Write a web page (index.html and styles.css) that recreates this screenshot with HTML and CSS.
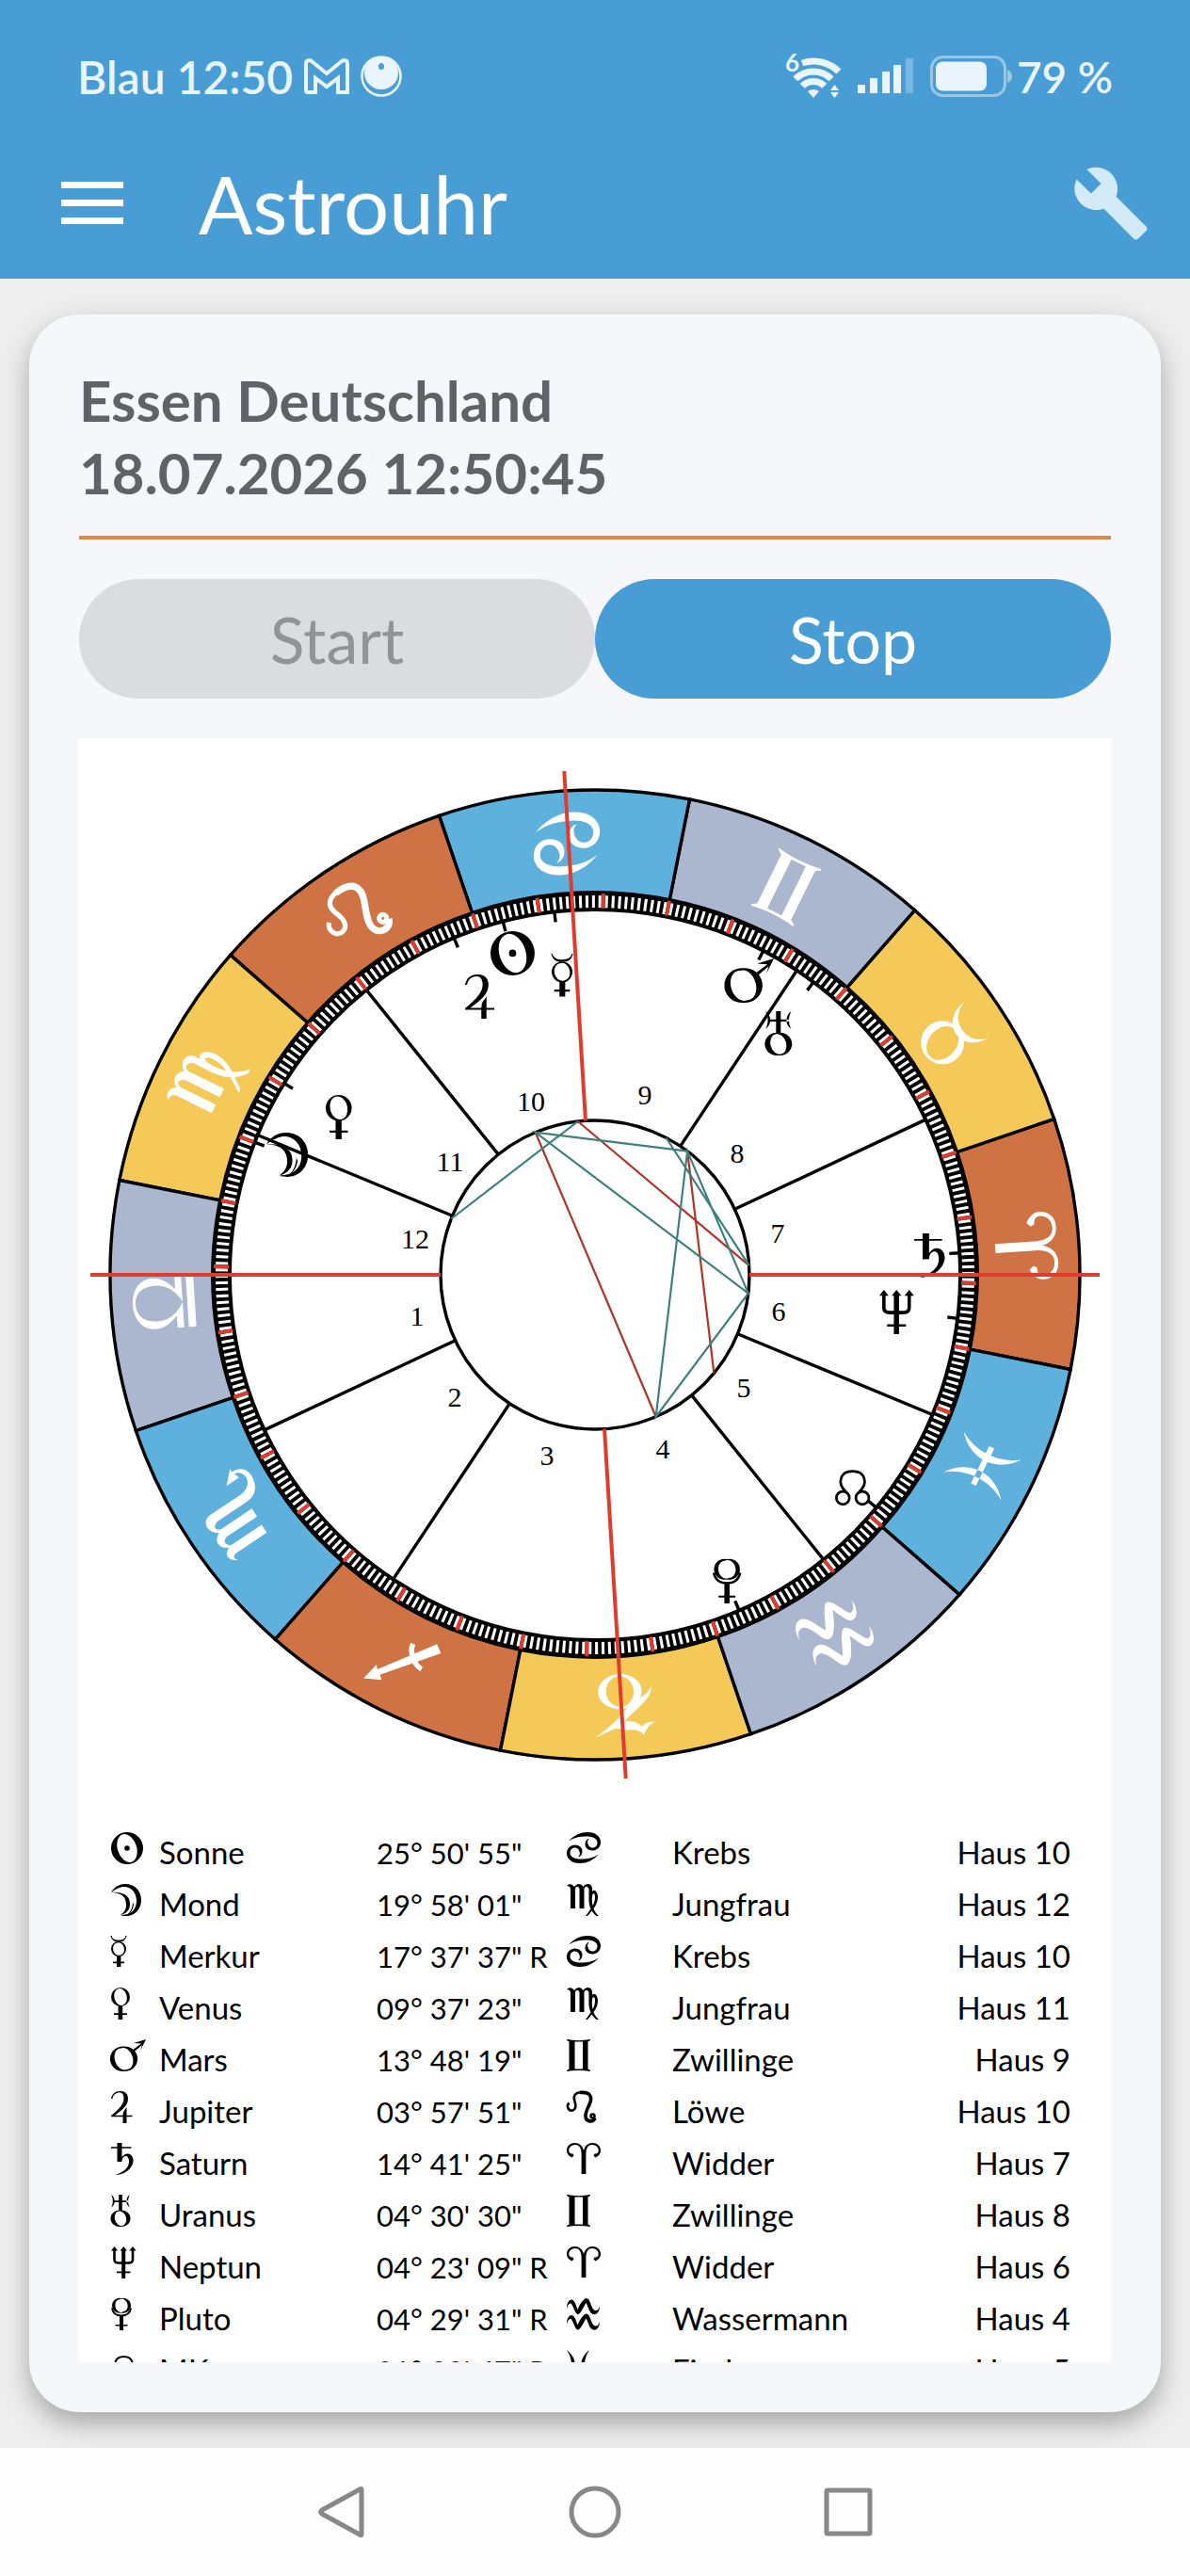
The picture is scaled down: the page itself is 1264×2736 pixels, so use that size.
FILE: index.html
```html
<!DOCTYPE html>
<html lang="de">
<head>
<meta charset="UTF-8">
<meta name="viewport" content="width=device-width, initial-scale=1.0">
<title>Astrouhr</title>
<link rel="stylesheet" href="styles.css">
</head>
<body>

<!-- Shared symbols for the wheel and the table -->
<svg class="defs" width="0" height="0" aria-hidden="true">
    <defs>
        <path id="sector" d="M-133.3 -497.5A515 515 0 0 1 133.3 -497.5L105.1 -392.2A406 406 0 0 0 -105.1 -392.2Z"/>

        <!-- Planets -->
        <g id="sun">
            <path fill-rule="evenodd" d="M17 0A17 17 0 1 1 17 34A17 17 0 1 1 17 0ZM12.5 2.3A10 15.2 -18 1 0 21.5 31.7A10 15.2 -18 1 0 12.5 2.3Z"/>
            <circle cx="17" cy="17" r="2.8"/>
        </g>
        <g id="moon">
            <path d="M0 9C4 2 10 0 15 0C25 0 32 7 32 17C32 27 25 34 16 34C14 34 12 34 10 33C21 33 27 27 27 18C27 8 20 2 12 3C7 4 4 6 0 9Z"/>
            <path d="M0 9C12 8 20 12 20 21C20 27 17 31 10 33C14 30 16 27 16 22C16 14 11 9 0 9ZM15 34C20 31 23 26 23 19L24 22C23 28 20 32 15 34Z"/>
        </g>
        <g id="mercury">
            <path d="M0 0C1 5 4 6 8 6C12 6 15 5 16 0C15 4 12 5 8 5C4 5 1 4 0 0Z" stroke="currentColor" stroke-width=".8"/>
            <path fill-rule="evenodd" d="M8 6A8 8 0 1 1 8 22A8 8 0 1 1 8 6ZM6.5 7.4A5.4 6.8 -14 1 0 9.5 20.6A5.4 6.8 -14 1 0 6.5 7.4Z"/>
            <path d="M6 21.5H10.4V33H6ZM2 27.5H14V29.2H2Z"/>
        </g>
        <g id="venus">
            <path fill-rule="evenodd" d="M10 0A10 10 0 1 1 10 20A10 10 0 1 1 10 0ZM7.7 1.3A6.6 8.9 -14 1 0 12.3 18.7A6.6 8.9 -14 1 0 7.7 1.3Z"/>
            <path d="M7.6 19H12.2V34H7.6ZM3 27.3H17V29H3Z"/>
        </g>
        <g id="mars">
            <path fill-rule="evenodd" d="M13.5 7.5A13.5 13.3 0 1 1 13.5 34A13.5 13.3 0 1 1 13.5 7.5ZM10.5 9.5A8.3 11.8 -18 1 0 16.5 32A8.3 11.8 -18 1 0 10.5 9.5Z"/>
            <path d="M22 12L32 4.5L24 4L37 0L31 12L33 6L24 13.5Z"/>
        </g>
        <g id="jupiter">
            <path d="M0 8C1 3 4 0 10 0C15 0 18 3 18 8C18 15 12 20 4 25.7H12.5L13 22L16.5 17V25.7H22.5V27.2H16.5V34H12.5V27.2H0V26C10 18 13.5 13 13.5 8C13.5 4 12 1.5 9 1.5C5 1.5 2 4 1.5 8Z"/>
        </g>
        <g id="saturn">
            <path d="M0 4.3H6.5V0H11.5V4.3H21.5V5.7H11.5V15C14 12 16 11 18 11.5C22 12 24 16 23.5 20C22 28 14 34 4 34C14 31 19 26 19 20C19 15 17 14 15.5 14C13 14 11.5 17 11.5 20H6.5V5.7H0Z"/>
        </g>
        <g id="uranus">
            <path fill-rule="evenodd" d="M10 16.5A9.5 8.8 0 1 1 10 34A9.5 8.8 0 1 1 10 16.5ZM8 17.6A6 7.9 -18 1 0 12 33A6 7.9 -18 1 0 8 17.6Z"/>
            <path d="M8.2 0H11.8V17H8.2ZM2 6.3H18V8H2ZM0 0C5 3 5 11 0 13.5C2.5 10 2.5 4 0 0ZM20 0C15 3 15 11 20 13.5C17.5 10 17.5 4 20 0Z"/>
        </g>
        <g id="neptune">
            <path d="M3.5 4V14Q3.5 17.5 8 17.5H18.5Q23 17.5 23 14V4" fill="none" stroke="currentColor" stroke-width="2.6"/>
            <path d="M11.2 3H15.2V34H11.2ZM6 26.5H20.5V28.3H6ZM0 4.5L3.5 0L7.2 4.5ZM9.5 4.5L13.2 0L17 4.5ZM19.3 4.5L23 0L26.7 4.5Z"/>
        </g>
        <g id="pluto">
            <path fill-rule="evenodd" d="M11 0A8 8 0 1 1 11 15.5A8 8 0 1 1 11 0ZM9.3 1.3A5.4 6.9 -14 1 0 12.7 14.3A5.4 6.9 -14 1 0 9.3 1.3Z"/>
            <path d="M0.8 10.5C2 16 6 18.5 11 18.5C16 18.5 20 16 21.2 10.5" fill="none" stroke="currentColor" stroke-width="1.8"/>
            <path d="M9 19H13V34H9ZM4.5 28H17.5V29.6H4.5Z"/>
        </g>
        <g id="node" fill="none" stroke="currentColor" stroke-width="2">
            <path d="M8.5 23C1 16 4 7 13.5 7C23 7 26 16 18.5 23"/>
            <circle cx="6" cy="27.5" r="5"/>
            <circle cx="21" cy="27.5" r="5"/>
        </g>

        <!-- Signs -->
        <g id="aries">
            <path d="M15.6 33V12C15.5 5 13 2 9 2C4 2 1.5 6 2.5 9.5C3 11 4.5 11.5 6.5 11.5L7.5 13.5L5.5 15.5C1.5 13.5 0 11 0 8C0 3 4 0 8.5 0C13.5 0 16.8 3 18 8C19.2 3 22.5 0 27.5 0C32 0 36 3 36 8C36 11 34.5 13.5 30.5 15.5L28.5 13.5L29.5 11.5C31.5 11.5 33 11 33.5 9.5C34.5 6 32 2 27 2C23 2 20.5 5 20.4 12V33Z"/>
        </g>
        <g id="taurus">
            <path fill-rule="evenodd" d="M0 -4A11.5 11.5 0 1 1 0 19A11.5 11.5 0 1 1 0 -4ZM-2.5 -1.8A7.2 9.8 -16 1 0 3 17A7.2 9.8 -16 1 0 -2.5 -1.8Z"/>
            <path d="M-11.5 -14C-9 -7 -5 -5 0 -5C5 -5 9 -7 11.5 -14C11 -6 6 -1 0 -1C-6 -1 -11 -6 -11.5 -14Z"/>
        </g>
        <g id="gemini">
            <path d="M0 0C8 1.5 17 1.5 25 0V1L22.5 2.5V31.5L25 33V34C17 32.5 8 32.5 0 34V33L2.5 31.5V2.5L0 1ZM8.5 2.5V31.5H17V2.5Z" fill-rule="evenodd"/>
        </g>
        <g id="cancer">
            <path id="claw" d="M2 9.5C8 3 15 0 22 0C31 0 36 5 36 10.5C36 16 32 19.5 27.5 19.5C22.5 19.5 19.5 16.5 19.5 13C19.5 9.5 21.5 7 24 6.5C22 8.5 21.8 10.5 22.5 12.5C23.3 15 25 16.5 27.5 16.5C30.5 16.5 32.5 14 32.5 11C32.5 7 28 4.5 21 4.5C14 4.5 8 5.5 2 9.5Z"/>
            <use href="#claw" transform="rotate(180 18 16.5)"/>
        </g>
        <g id="leo" fill="none" stroke="currentColor">
            <path d="M2.5 12.5C-1 16 2 21.5 6 20.5C10 19.5 10 15 8.5 11C7 6.5 7 1.5 16 1.2" stroke-width="2.6"/>
            <path d="M14 1.5C26 0.5 27 7 24.5 13C22 19 19.5 23 20 27C20.5 32.5 28 34 30 28.5" stroke-width="3.6"/>
            <circle cx="27.5" cy="26.5" r="2" stroke-width="2.5"/>
        </g>
        <g id="virgo">
            <path d="M0 2C3 -1 6 0 8 3C11 -1 15 -1 17.5 3C20 -1 26 -1 27 4V8C29 5 33 8 33 14C33 21 29 26 22 34H20C26 26 30 21 30 14C30 9 27.5 9 27 13C26 22 29 30 34 34H31.5C25 29 23 22 23.5 12V5C22 2 19.5 2 18.5 5V26H13.5V5C12 2 10 2 9 5V26H4V6C4 3 2.5 2 0 2Z"/>
        </g>
        <g id="libra">
            <path fill-rule="evenodd" d="M-13.5 10V6.5H-7C-11 3 -13.5 -1 -13.5 -5C-13.5 -12 -8 -16.5 0 -16.5C8 -16.5 13.5 -12 13.5 -5C13.5 -1 11 3 7 6.5H13.5V10H0C6 7 9.5 2 9.5 -4C9.5 -11 6 -15 0 -15C-6 -15 -9.5 -11 -9.5 -4C-9.5 2 -6 7 0 10ZM-13.5 12.5H13.5V16.5H-13.5Z"/>
        </g>
        <g id="scorpio">
            <path d="M-20.5 -12.5C-18 -17 -14 -17 -12.5 -12.5C-10 -17.5 -5 -17.5 -3 -12.5C-1 -17.5 7.5 -18 7.5 -11V8C7.5 13 11 16.5 15 15.5C17 15 18.5 13.5 18.5 11.5L15.5 12.5L15.5 4.5L22 11L20 11C20 16 17 18.5 13 18.5C7 18.5 2.5 15 2.5 9V-10C1.5 -14 -1.5 -13.5 -2 -10.5V9H-7V-10.5C-8 -14 -11 -13.5 -12 -10.5V8.5H-17V-10.5C-17 -13 -18 -14 -20.5 -12.5Z"/>
        </g>
        <g id="sagittarius">
            <path d="M-15.5 13L8.5 -11.5L6.5 -13.5L15.5 -17L12.5 -7.5L11 -9.5L-11.5 16.5Z"/>
            <path d="M-10 1C-6 1 0 6 0 11" fill="none" stroke="currentColor" stroke-width="2.8"/>
        </g>
        <g id="capricorn">
            <path fill-rule="evenodd" d="M1.3 -1.5A11.6 9.3 0 1 1 1.3 17.1A11.6 9.3 0 1 1 1.3 -1.5ZM1.3 -0.3A7.3 8.1 0 1 0 1.3 15.9A7.3 8.1 0 1 0 1.3 -0.3Z"/>
            <path d="M-15.5 10C-15.5 6 -13.5 3.5 -10.5 1C-8.5 -1 -7.5 -2 -5.4 -3.5L-0.1 -8.2L-4.3 -8.4C-7 -9 -8 -10.5 -9.1 -11.3C-11 -9.5 -13.5 -9 -16.4 -9.3C-13.5 -10.5 -11.5 -12.5 -10 -16C-8 -13.5 -6 -12.9 -3.2 -12.9C-0.5 -12.9 2 -11.7 5.1 -11.7L16.2 -16C11 -12.5 8 -10.5 4.9 -7.9L-2.3 -0.8L-8 2.5L-10.1 4.5C-13 5.5 -14.5 7.5 -15.5 10Z"/>
        </g>
        <g id="aquarius">
            <path id="wave" d="M0 11C0 5 2 2 5 1.5C8 1.5 9 5 11.5 12C14 6 18 0 21 0C25 0 25 9 29 12.5C32 14 34 12 35 8C35 14 32 18 28 17C24 16 23 9 20.5 5C18 9 14 18 11.5 17C8.5 16 7 8 4.5 5.5C2.5 5 1 7 0 11Z"/>
            <use href="#wave" y="16.5"/>
        </g>
        <g id="pisces">
            <path d="M0 0C12 9 12 25 0 34C7 24 7 10 0 0ZM24 0C12 9 12 25 24 34C17 24 17 10 24 0ZM1 15.5H23V18.5H1Z"/>
        </g>
    </defs>
</svg>

<header>
    <div class="statusbar">
        <div class="status-group">
            <span>Blau</span>
            <span>12:50</span>
            <svg class="mail" width="48" height="38" viewBox="0 0 48 38">
                <path d="M2 34V6C2 2 5 1 8 3L24 16L40 3C43 1 46 2 46 6V36H36V21L24 30L12 21V36H4Q2 36 2 34Z"/>
            </svg>
            <svg width="44" height="44" viewBox="0 0 44 44">
                <circle cx="22" cy="22" r="20.5" fill="none" stroke="currentColor" stroke-width="2.5"/>
                <path fill-rule="evenodd" d="M22 1A18 17.5 0 1 1 22 36A18 17.5 0 1 1 22 1ZM22 8A3 3.5 0 1 0 22 15A3 3.5 0 1 0 22 8Z"/>
            </svg>
        </div>
        <div class="status-group signals">
            <svg class="wifi" width="60" height="52" viewBox="0 0 60 52">
                <text x="0" y="21">6</text>
                <g fill="none" stroke="currentColor" stroke-width="7">
                    <path d="M18 12A38 38 0 0 1 56.9 21.1"/>
                    <path d="M10.9 28.9A27 27 0 0 1 49.1 28.9"/>
                    <path d="M18.3 36.3A16.5 16.5 0 0 1 41.7 36.3"/>
                </g>
                <path d="M30 49L24 42Q30 38 36 42ZM48 41L52.5 35L57 41ZM48 43L52.5 49L57 43Z"/>
            </svg>
            <svg width="60" height="38" viewBox="0 0 60 38">
                <path d="M0 28H8V37H0ZM13 21H21V37H13ZM26 14H34V37H26ZM38 7H46V37H38Z"/>
                <path class="dim" d="M51 0H59V37H51Z"/>
            </svg>
            <div class="battery">
                <svg width="88" height="44" viewBox="0 0 88 44">
                    <rect class="outline" x="1.5" y="1.5" width="78" height="41" rx="12"/>
                    <rect x="6" y="6.5" width="54" height="31" rx="7"/>
                    <path class="nub" d="M82 15Q87 17 87 22Q87 27 82 29Z"/>
                </svg>
                <span>79 %</span>
            </div>
        </div>
    </div>
    <div class="toolbar">
        <button aria-label="Menü">
            <svg width="66" height="46" viewBox="0 0 66 46"><path d="M0 0H66V7H0ZM0 19H66V26H0ZM0 38H66V45H0Z"/></svg>
        </button>
        <h1>Astrouhr</h1>
        <button class="tools" aria-label="Einstellungen">
            <svg width="84" height="84" viewBox="0 0 24 24"><path d="M22.7 19l-9.1-9.1c.9-2.3.4-5-1.5-6.9-2-2-5-2.4-7.4-1.3L9 6 6 9 1.6 4.7C.4 7.1.9 10.1 2.9 12.1c1.9 1.9 4.6 2.4 6.9 1.5l9.1 9.1c.4.4 1 .4 1.4 0l2.3-2.3c.5-.4.5-1.1.1-1.4z"/></svg>
        </button>
    </div>
</header>

<main>
    <section class="card">
        <h2>Essen Deutschland<br>18.07.2026 12:50:45</h2>
        <div class="buttons">
            <button class="btn" disabled>Start</button>
            <button class="btn">Stop</button>
        </div>
        <div class="chart">
            <svg class="wheel" viewBox="-548 -570 1096 1120" role="img" aria-label="Horoskop">
                <!-- Zodiac ring -->
                <g transform="rotate(86.25)"><use href="#sector" class="sector fire"/><use href="#aries" class="sign" transform="translate(-36 -492) scale(2)"/></g>
                <g transform="rotate(56.25)"><use href="#sector" class="sector earth"/><use href="#taurus" class="sign" transform="translate(0 -459) scale(2)"/></g>
                <g transform="rotate(26.25)"><use href="#sector" class="sector air"/><use href="#gemini" class="sign" transform="translate(-25 -493) scale(2)"/></g>
                <g transform="rotate(-3.75)"><use href="#sector" class="sector water"/><use href="#cancer" class="sign" transform="translate(-36 -492) scale(2)"/></g>
                <g transform="rotate(-33.75)"><use href="#sector" class="sector fire"/><use href="#leo" class="sign" transform="translate(-32 -493) scale(2)"/></g>
                <g transform="rotate(-63.75)"><use href="#sector" class="sector earth"/><use href="#virgo" class="sign" transform="translate(-34 -493) scale(2)"/></g>
                <g transform="rotate(-93.75)"><use href="#sector" class="sector air"/><use href="#libra" class="sign" transform="translate(0 -459) scale(2)"/></g>
                <g transform="rotate(-123.75)"><use href="#sector" class="sector water"/><use href="#scorpio" class="sign" transform="translate(0 -459) scale(2)"/></g>
                <g transform="rotate(-153.75)"><use href="#sector" class="sector fire"/><use href="#sagittarius" class="sign" transform="translate(0 -459) scale(2)"/></g>
                <g transform="rotate(176.25)"><use href="#sector" class="sector earth"/><use href="#capricorn" class="sign" transform="translate(0 -459) scale(2)"/></g>
                <g transform="rotate(146.25)"><use href="#sector" class="sector air"/><use href="#aquarius" class="sign" transform="translate(-35 -493) scale(2)"/></g>
                <g transform="rotate(116.25)"><use href="#sector" class="sector water"/><use href="#pisces" class="sign" transform="translate(-24 -493) scale(2)"/></g>

                <!-- Degree scale, one tick per degree, red every ten -->
                <g class="scale" transform="rotate(11.25)">
                    <circle r="397" pathLength="360" class="degree"/>
                    <circle r="405"/>
                    <circle r="388"/>
                    <circle r="397" pathLength="360" class="ten"/>
                </g>
                <circle r="164" class="line"/>

                <!-- House cusps -->
                <g class="line">
                    <path d="M164 0H388" transform="rotate(-25.15)"/>
                    <path d="M164 0H388" transform="rotate(-56.45)"/>
                    <path d="M164 0H388" transform="rotate(-128.75)"/>
                    <path d="M164 0H388" transform="rotate(-157.5)"/>
                    <path d="M164 0H388" transform="rotate(-205.15)"/>
                    <path d="M164 0H388" transform="rotate(-236.45)"/>
                    <path d="M164 0H388" transform="rotate(-308.75)"/>
                    <path d="M164 0H388" transform="rotate(-337.5)"/>
                </g>

                <!-- Planet marks -->
                <g class="line">
                    <path d="M377 0H388" transform="rotate(-104.6)"/>
                    <path d="M377 0H388" transform="rotate(-158.72)"/>
                    <path d="M377 0H388" transform="rotate(-96.38)"/>
                    <path d="M377 0H388" transform="rotate(-148.37)"/>
                    <path d="M377 0H388" transform="rotate(-62.55)"/>
                    <path d="M377 0H388" transform="rotate(-112.71)"/>
                    <path d="M377 0H388" transform="rotate(-3.44)"/>
                    <path d="M377 0H388" transform="rotate(-53.26)"/>
                    <path d="M377 0H388" transform="rotate(6.86)"/>
                    <path d="M377 0H388" transform="rotate(66.76)"/>
                    <path d="M377 0H388" transform="rotate(39.6)"/>
                </g>

                <!-- Aspects -->
                <path class="aspect hard" d="M-18.2 -163L163.7 -9.8M-63.3 -151.3L64.7 150.7M98.1 -131.4L126.4 104.5"/>
                <path class="aspect soft" d="M-152.8 -59.5L-18.2 -163M98.1 -131.4L-63.3 -151.3L162.8 19.6L64.7 150.7L98.1 -131.4L162.8 19.6M75.6 -145.5L163.7 -9.8"/>

                <g class="planets">
                    <use href="#sun" transform="translate(-111 -365) scale(1.38)"/>
                    <use href="#moon" transform="translate(-349 -151) scale(1.38)"/>
                    <use href="#mercury" transform="translate(-46 -341) scale(1.38)"/>
                    <use href="#venus" transform="translate(-286 -191) scale(1.38)"/>
                    <use href="#mars" transform="translate(139 -336) scale(1.38)"/>
                    <use href="#jupiter" transform="translate(-138 -319) scale(1.38)"/>
                    <use href="#saturn" transform="translate(339 -44) scale(1.38)"/>
                    <use href="#uranus" transform="translate(181 -280) scale(1.38)"/>
                    <use href="#neptune" transform="translate(302 16) scale(1.38)"/>
                    <use href="#pluto" transform="translate(125 302) scale(1.38)"/>
                    <use href="#node" transform="translate(255 199) scale(1.38)"/>
                </g>

                <g class="houses">
                    <text x="-189" y="54">1</text>
                    <text x="-149" y="140">2</text>
                    <text x="-51" y="202">3</text>
                    <text x="72" y="195">4</text>
                    <text x="158" y="130">5</text>
                    <text x="195" y="49">6</text>
                    <text x="194" y="-34">7</text>
                    <text x="151" y="-119">8</text>
                    <text x="53" y="-181">9</text>
                    <text x="-68" y="-174">10</text>
                    <text x="-154" y="-110">11</text>
                    <text x="-191" y="-28">12</text>
                </g>

                <!-- AC/DC and MC/IC axes -->
                <g class="axis">
                    <path d="M164 0H536M-164 0H-536"/>
                    <path d="M164 0H536M-164 0H-536" transform="rotate(-93.5)"/>
                </g>
            </svg>

            <table>
                <tr><td class="glyph"><svg viewBox="0 0 40 34"><use href="#sun"/></svg></td><td class="planet">Sonne</td><td class="degrees">25° 50' 55"</td><td class="glyph-sign"><svg viewBox="0 0 40 34"><use href="#cancer"/></svg></td><td>Krebs</td><td class="house">Haus 10</td></tr>
                <tr><td class="glyph"><svg viewBox="0 0 40 34"><use href="#moon"/></svg></td><td class="planet">Mond</td><td class="degrees">19° 58' 01"</td><td class="glyph-sign"><svg viewBox="0 0 40 34"><use href="#virgo"/></svg></td><td>Jungfrau</td><td class="house">Haus 12</td></tr>
                <tr><td class="glyph"><svg viewBox="0 0 40 34"><use href="#mercury"/></svg></td><td class="planet">Merkur</td><td class="degrees">17° 37' 37" R</td><td class="glyph-sign"><svg viewBox="0 0 40 34"><use href="#cancer"/></svg></td><td>Krebs</td><td class="house">Haus 10</td></tr>
                <tr><td class="glyph"><svg viewBox="0 0 40 34"><use href="#venus"/></svg></td><td class="planet">Venus</td><td class="degrees">09° 37' 23"</td><td class="glyph-sign"><svg viewBox="0 0 40 34"><use href="#virgo"/></svg></td><td>Jungfrau</td><td class="house">Haus 11</td></tr>
                <tr><td class="glyph"><svg viewBox="0 0 40 34"><use href="#mars"/></svg></td><td class="planet">Mars</td><td class="degrees">13° 48' 19"</td><td class="glyph-sign"><svg viewBox="0 0 40 34"><use href="#gemini"/></svg></td><td>Zwillinge</td><td class="house">Haus 9</td></tr>
                <tr><td class="glyph"><svg viewBox="0 0 40 34"><use href="#jupiter"/></svg></td><td class="planet">Jupiter</td><td class="degrees">03° 57' 51"</td><td class="glyph-sign"><svg viewBox="0 0 40 34"><use href="#leo"/></svg></td><td>Löwe</td><td class="house">Haus 10</td></tr>
                <tr><td class="glyph"><svg viewBox="0 0 40 34"><use href="#saturn"/></svg></td><td class="planet">Saturn</td><td class="degrees">14° 41' 25"</td><td class="glyph-sign"><svg viewBox="0 0 40 34"><use href="#aries"/></svg></td><td>Widder</td><td class="house">Haus 7</td></tr>
                <tr><td class="glyph"><svg viewBox="0 0 40 34"><use href="#uranus"/></svg></td><td class="planet">Uranus</td><td class="degrees">04° 30' 30"</td><td class="glyph-sign"><svg viewBox="0 0 40 34"><use href="#gemini"/></svg></td><td>Zwillinge</td><td class="house">Haus 8</td></tr>
                <tr><td class="glyph"><svg viewBox="0 0 40 34"><use href="#neptune"/></svg></td><td class="planet">Neptun</td><td class="degrees">04° 23' 09" R</td><td class="glyph-sign"><svg viewBox="0 0 40 34"><use href="#aries"/></svg></td><td>Widder</td><td class="house">Haus 6</td></tr>
                <tr><td class="glyph"><svg viewBox="0 0 40 34"><use href="#pluto"/></svg></td><td class="planet">Pluto</td><td class="degrees">04° 29' 31" R</td><td class="glyph-sign"><svg viewBox="0 0 40 34"><use href="#aquarius"/></svg></td><td>Wassermann</td><td class="house">Haus 4</td></tr>
                <tr><td class="glyph"><svg viewBox="0 0 40 34"><use href="#node"/></svg></td><td class="planet">MK</td><td class="degrees">01° 38' 47" R</td><td class="glyph-sign"><svg viewBox="0 0 40 34"><use href="#pisces"/></svg></td><td>Fische</td><td class="house">Haus 5</td></tr>
            </table>
        </div>
    </section>
</main>

<nav>
    <button aria-label="Zurück"><svg width="60" height="60" viewBox="0 0 60 60"><path d="M51 6V54Q51 55 50 54.5L9 32Q6 30 9 28L50 5.5Q51 5 51 6Z"/></svg></button>
    <button aria-label="Start"><svg width="60" height="60" viewBox="0 0 60 60"><circle cx="30" cy="30" r="25"/></svg></button>
    <button aria-label="Übersicht"><svg width="60" height="60" viewBox="0 0 60 60"><rect x="7" y="7" width="46" height="46" rx="1"/></svg></button>
</nav>

</body>
</html>
```
FILE: styles.css
```css
* {
    box-sizing: border-box;
}
body {
    display: flex;
    flex-direction: column;
    height: 100vh;
    margin: 0;
    background-color: #EEEEEE;
    font-family: 'Lato', 'Open Sans', sans-serif;
    color: #000000;
}
svg {
    fill: currentColor;
    overflow: visible;
}
.defs {
    position: absolute;
}
button {
    padding: 0;
    border: 0;
    background: none;
    color: inherit;
    font-family: inherit;
    cursor: pointer;
}
button svg {
    display: block;
}

/* Header */
header {
    flex: none;
    background-color: #479DD4; /* App blue */
    color: #FFFFFF;
}
.statusbar {
    display: flex;
    justify-content: space-between;
    height: 162px;
    padding: 0 82px;
    color: #EAF4FC;
    font-size: 48px;
    font-weight: 600;
}
.status-group {
    display: flex;
    align-items: center;
    gap: 12px;
}
.signals {
    gap: 17px;
}
.battery {
    display: flex;
    align-items: center;
    gap: 4px;
    font-size: 46px;
}
.mail {
    fill: none;
    stroke: currentColor;
    stroke-width: 4;
}
.wifi text {
    font-size: 26px;
    font-weight: 700;
}
.dim {
    opacity: 0.3;
}
.outline {
    fill: none;
    stroke: currentColor;
    stroke-width: 3;
    opacity: 0.5;
}
.nub {
    opacity: 0.5;
}
.toolbar {
    display: flex;
    align-items: center;
    height: 134px;
    padding: 0 42px 26px 65px;
}
.toolbar h1 {
    flex: 1;
    margin: 0 0 0 80px;
    font-size: 85px;
    font-weight: 400;
    line-height: 108px;
}
.tools {
    color: #D3EBF7;
}

/* Card */
main {
    display: flex;
    flex: 1;
    min-height: 0;
    padding: 38px 31px;
}
.card {
    display: flex;
    flex-direction: column;
    flex: 1;
    min-width: 0;
    padding: 53px;
    border-radius: 54px;
    background-color: #F6F7FB;
    box-shadow: 0 12px 28px rgba(0, 0, 0, 0.3);
}
.card h2 {
    margin: 0 0 42px;
    padding-bottom: 28px;
    border-bottom: 4px solid #DD8B46; /* Orange divider */
    color: #5F6368;
    font-size: 60px;
    font-weight: 700;
    line-height: 77px;
}
.buttons {
    display: flex;
    margin-bottom: 42px;
}
.btn {
    flex: 1;
    height: 127px;
    border-radius: 64px;
    background-color: #479DD4;
    color: #FFFFFF;
    font-size: 68px;
}
.btn:disabled {
    background-color: #DBDCE0;
    color: #929297;
}

/* Chart, scrolls inside the card */
.chart {
    flex: 1;
    min-height: 0;
    padding-bottom: 40px;
    overflow: auto;
    scrollbar-width: none;
    background-color: #FFFFFF;
}
.wheel {
    display: block;
    width: 100%;
}
.sector {
    stroke: #000000;
    stroke-width: 3.4;
}
.fire {
    fill: #CF7244;
}
.earth {
    fill: #F5C957;
}
.air {
    fill: #AAB7CF;
}
.water {
    fill: #5FB1DD;
}
.sign {
    color: #FFFFFF;
    fill: #FFFFFF;
}
.line {
    fill: none;
    stroke: #000000;
    stroke-width: 3.4;
}
.scale circle {
    fill: none;
    stroke: #000000;
    stroke-width: 4;
}
.scale .degree {
    stroke-width: 18;
    stroke-dasharray: 0.56 0.44;
    stroke-dashoffset: 0.28;
}
.scale .ten {
    stroke: #E03C2D;
    stroke-width: 16;
    stroke-dasharray: 0.56 9.44;
    stroke-dashoffset: 0.28;
}
.aspect {
    fill: none;
    stroke-width: 2.2;
}
.hard {
    stroke: #B03428;
}
.soft {
    stroke: #3E7F80;
}
.axis {
    stroke: #E03C2D;
    stroke-width: 4;
}
.houses {
    font-family: 'Liberation Serif', serif;
    font-size: 30px;
    text-anchor: middle;
}

/* Planet table */
table {
    width: calc(100% - 77px);
    margin: 36px 43px 0 34px;
    border-collapse: collapse;
    table-layout: fixed;
    font-size: 33px;
    line-height: 55px;
    white-space: nowrap;
}
td {
    padding: 0;
    vertical-align: baseline;
}
td svg {
    width: 40px;
    height: 34px;
}
.glyph {
    width: 51px;
}
.planet {
    width: 231px;
}
.degrees {
    width: 202px;
    font-size: 31px;
    line-height: 50px;
}
.glyph-sign {
    width: 112px;
}
.house {
    text-align: right;
}

/* Android navigation */
nav {
    display: flex;
    flex: none;
    justify-content: center;
    align-items: center;
    gap: 209px;
    height: 136px;
    background-color: #FDFDFD;
    color: #888888;
}
nav svg {
    fill: none;
    stroke: currentColor;
    stroke-width: 5;
}
```
